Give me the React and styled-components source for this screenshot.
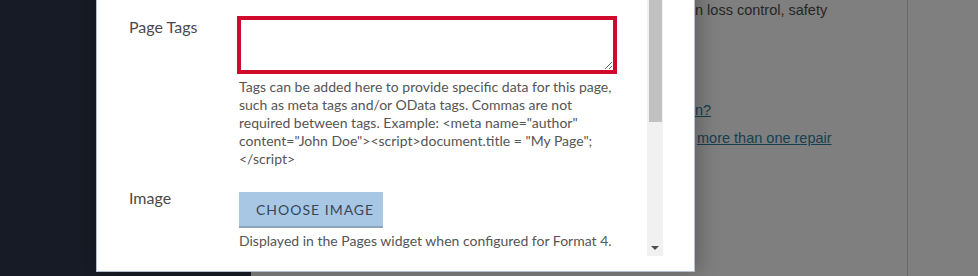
import React from "react";
import styled, { createGlobalStyle } from "styled-components";

const Global = createGlobalStyle`
  html, body { margin: 0; padding: 0; background: #161b25; }
  * { box-sizing: border-box; }
`;

const Screen = styled.div`
  position: relative;
  width: 978px;
  height: 276px;
  overflow: hidden;
  display: flex;
  font-family: "Liberation Sans", Arial, sans-serif;
`;

const Sidebar = styled.div`
  width: 251px;
  flex: none;
  background: #161b25;
`;

const Main = styled.div`
  flex: 1;
  display: flex;
  background: #7f7f7f;
`;

const Article = styled.div`
  width: 656px;
  flex: none;
  padding: 1px 0 0 444px;
  color: #262626;
  font-size: 14.5px;
  line-height: 18px;
`;

const Para = styled.p`
  margin: 0 0 ${(p) => p.$gap || 10}px;
  padding-left: ${(p) => p.$indent || 0}px;
  white-space: nowrap;
`;

const Link = styled.a`
  color: #163f4f;
  text-decoration: underline;
`;

const Aside = styled.div`
  flex: 1;
  border-left: 1px solid #6a6a6a;
`;

const Modal = styled.div`
  position: absolute;
  left: 96px;
  top: -20px;
  bottom: 4px;
  width: 599px;
  background: #fff;
  border: 1px solid #b3bfcf;
  border-top: none;
  box-shadow: 6px 0 18px rgba(0, 0, 0, 0.22);
  display: flex;
  padding: 0 31px 15px 32px;
  font-family: Lato, "Noto Sans", sans-serif;
`;

const Body = styled.div`
  flex: 1;
  padding-top: 36px;
  display: flex;
  flex-direction: column;
  gap: 24px;
`;

const Row = styled.div`
  display: grid;
  grid-template-columns: 110px 1fr;
  align-items: start;
`;

const Label = styled.div`
  color: #4a4a4a;
  font-size: 16px;
  line-height: 18px;
  margin-top: ${(p) => p.$offset}px;
`;

const Field = styled.div`
  display: flex;
  flex-direction: column;
  align-items: flex-start;
`;

const TextArea = styled.textarea`
  display: block;
  width: 376px;
  height: 54px;
  margin: 2px 0 0;
  border: 2px solid #cf0a2c;
  box-shadow: 0 0 0 2px #cf0a2c;
  border-radius: 0;
  outline: none;
  background: #fff;
  font-family: inherit;
`;

const Help = styled.div`
  width: 380px;
  margin-top: ${(p) => p.$top}px;
  color: #555;
  font-size: 14px;
  line-height: 18px;
`;

const Button = styled.button`
  height: 36px;
  padding: 0 9px 0 17px;
  border: none;
  border-bottom: 2px solid #8ea6bd;
  background: #a8c7e5;
  color: #3a4654;
  font-family: inherit;
  font-size: 14px;
  letter-spacing: 1px;
  text-transform: uppercase;
  border-radius: 0;
`;

const ScrollTrack = styled.div`
  width: 16px;
  flex: none;
  background: #f1f1f1;
  display: flex;
  flex-direction: column;
  align-items: center;
  padding-bottom: 6px;
`;

const Thumb = styled.div`
  width: 13px;
  height: 142px;
  background: #c1c1c1;
`;

const Spacer = styled.div`
  flex: 1;
`;

const Arrow = styled.div`
  width: 0;
  height: 0;
  border-left: 4px solid transparent;
  border-right: 4px solid transparent;
  border-top: 4px solid #505050;
`;

export default function App() {
  return (
    <>
      <Global />
      <Screen>
        <Sidebar />
        <Main>
          <Article>
            <Para $gap={82}>n loss control, safety</Para>
            <Para $gap={10}>
              <Link href="#">n?</Link>
            </Para>
            <Para $indent={2}>
              <Link href="#">more than one repair</Link>
            </Para>
          </Article>
          <Aside />
        </Main>
        <Modal>
          <Body>
            <Row>
              <Label $offset={2}>Page Tags</Label>
              <Field>
                <TextArea />
                <Help $top={6}>
                  Tags can be added here to provide specific data for this page,
                  such as meta tags and/or OData tags. Commas are not required
                  between tags. Example: &lt;meta name="author" content="John
                  Doe"&gt;&lt;script&gt;document.title = "My Page";&lt;/script&gt;
                </Help>
              </Field>
            </Row>
            <Row>
              <Label $offset={-3}>Image</Label>
              <Field>
                <Button>Choose Image</Button>
                <Help $top={4}>
                  Displayed in the Pages widget when configured for Format 4.
                </Help>
              </Field>
            </Row>
          </Body>
          <ScrollTrack>
            <Thumb />
            <Spacer />
            <Arrow />
          </ScrollTrack>
        </Modal>
      </Screen>
    </>
  );
}
